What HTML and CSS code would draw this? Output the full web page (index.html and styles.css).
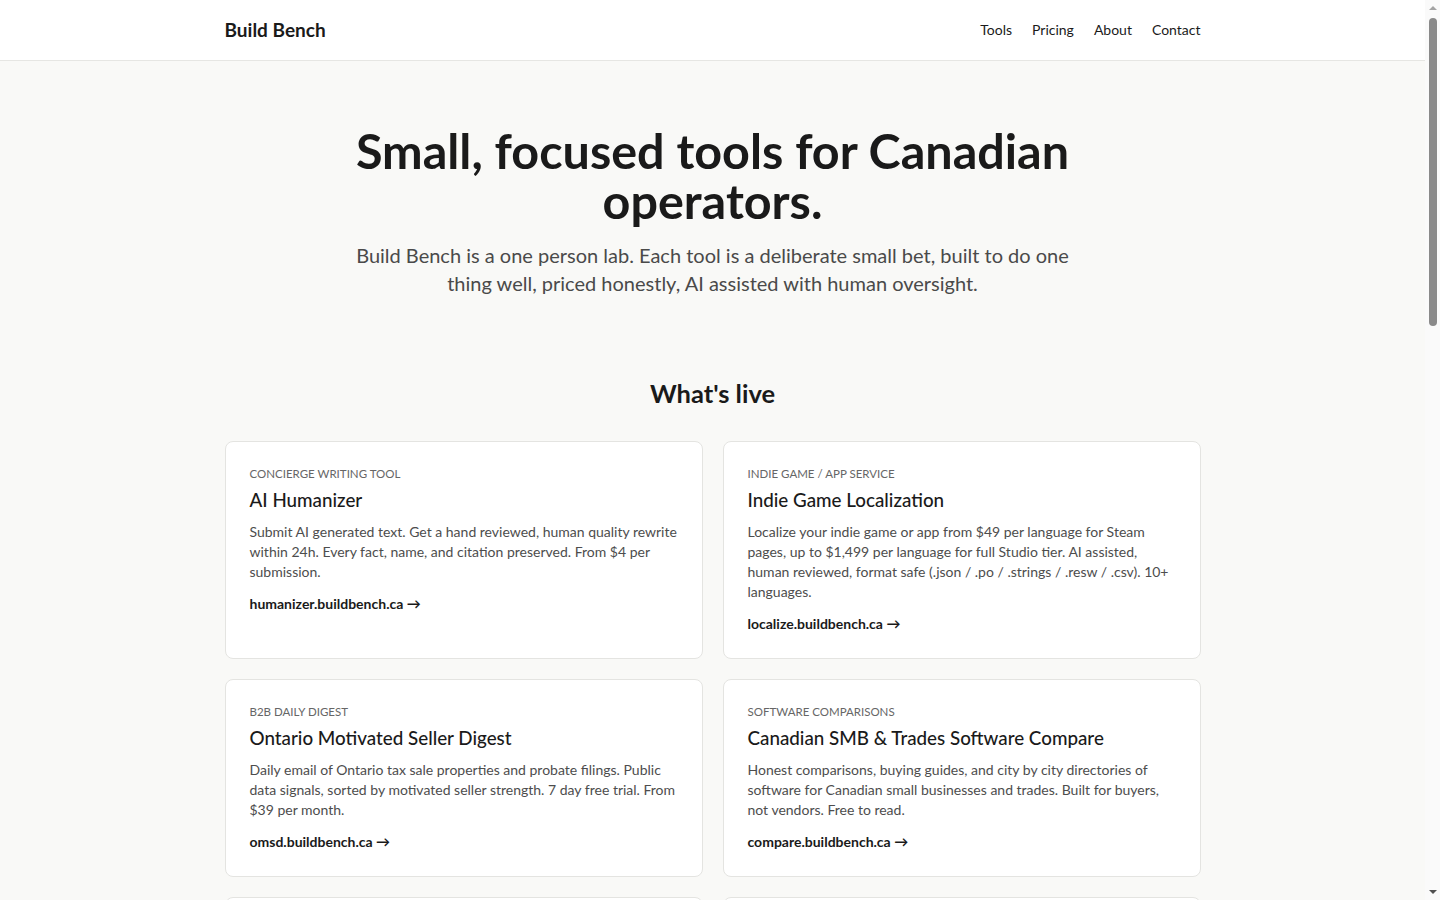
FILE: index.html
```html
<!DOCTYPE html>
<html lang="en">
<head>
<meta charset="utf-8">
<title>Build Bench</title>
<link rel="stylesheet" href="styles.css">
</head>
<body>
<header class="site-header">
  <div class="container header-inner">
    <a class="brand" href="#">Build Bench</a>
    <nav class="nav">
      <a href="#">Tools</a>
      <a href="#">Pricing</a>
      <a href="#">About</a>
      <a href="#">Contact</a>
    </nav>
  </div>
</header>
<main>
  <section class="hero">
    <div class="container">
      <h1>Small, focused tools for Canadian operators.</h1>
      <p class="lede">Build Bench is a one person lab. Each tool is a deliberate small bet, built to do one thing well, priced honestly, AI assisted with human oversight.</p>
    </div>
  </section>
  <section class="live">
    <div class="container">
      <h2>What's live</h2>
      <div class="grid">
        <article class="card">
          <div class="eyebrow">Concierge writing tool</div>
          <h3>AI Humanizer</h3>
          <p>Submit AI generated text. Get a hand reviewed, human quality rewrite within 24h. Every fact, name, and citation preserved. From $4 per submission.</p>
          <a class="card-link" href="#">humanizer.buildbench.ca →</a>
        </article>
        <article class="card">
          <div class="eyebrow">Indie game / app service</div>
          <h3>Indie Game Localization</h3>
          <p>Localize your indie game or app from $49 per language for Steam pages, up to $1,499 per language for full Studio tier. AI assisted, human reviewed, format safe (.json / .po / .strings / .resw / .csv). 10+ languages.</p>
          <a class="card-link" href="#">localize.buildbench.ca →</a>
        </article>
        <article class="card">
          <div class="eyebrow">B2B daily digest</div>
          <h3>Ontario Motivated Seller Digest</h3>
          <p>Daily email of Ontario tax sale properties and probate filings. Public data signals, sorted by motivated seller strength. 7 day free trial. From $39 per month.</p>
          <a class="card-link" href="#">omsd.buildbench.ca →</a>
        </article>
        <article class="card">
          <div class="eyebrow">Software comparisons</div>
          <h3>Canadian SMB &amp; Trades Software Compare</h3>
          <p>Honest comparisons, buying guides, and city by city directories of software for Canadian small businesses and trades. Built for buyers, not vendors. Free to read.</p>
          <a class="card-link" href="#">compare.buildbench.ca →</a>
        </article>
        <article class="card">
          <div class="eyebrow">Document service</div>
          <h3>Plain Language Rewrites</h3>
          <p>Turn dense policies, notices, and contracts into clear plain language. Reviewed by a person before delivery. From $19 per document.</p>
          <a class="card-link" href="#">plain.buildbench.ca →</a>
        </article>
        <article class="card">
          <div class="eyebrow">Small business utility</div>
          <h3>GST / HST Invoice Checker</h3>
          <p>Upload an invoice and check that Canadian sales tax lines, registration numbers, and totals add up. Free for up to 10 invoices a month.</p>
          <a class="card-link" href="#">invoices.buildbench.ca →</a>
        </article>
      </div>
    </div>
  </section>
  <section class="how">
    <div class="container">
      <h2>How Build Bench works</h2>
      <div class="steps">
        <div class="step">
          <h3>Small bets</h3>
          <p>Each tool starts as a narrow experiment with a clear job to do. If it earns its keep, it stays. If not, it is retired with notice.</p>
        </div>
        <div class="step">
          <h3>Honest pricing</h3>
          <p>Prices are listed up front in Canadian dollars. No seat games, no surprise upgrades, no long contracts.</p>
        </div>
        <div class="step">
          <h3>Human oversight</h3>
          <p>AI does the heavy lifting. A person reviews the output before anything reaches a customer.</p>
        </div>
      </div>
    </div>
  </section>
  <section class="retired">
    <div class="container">
      <h2>In the workshop</h2>
      <ul class="list">
        <li><strong>Permit Tracker</strong> — alerts for new municipal building permits in Ontario.</li>
        <li><strong>Grant Finder</strong> — a searchable list of Canadian small business grants.</li>
        <li><strong>Quote Builder</strong> — simple, branded quotes for trades businesses.</li>
      </ul>
    </div>
  </section>
</main>
<footer class="site-footer">
  <div class="container footer-inner">
    <span>© Build Bench. Made in Canada.</span>
    <span>hello@buildbench.ca</span>
  </div>
</footer>
<div class="scrollbar" aria-hidden="true">
  <span class="sb-arrow sb-up"></span>
  <span class="sb-thumb"></span>
  <span class="sb-arrow sb-down"></span>
</div>
</body>
</html>
```
FILE: styles.css
```css
* { box-sizing: border-box; }
html { margin: 0; padding: 0; background: #fafafa; }
body {
  margin: 0 15px 0 0;
  padding: 0;
  font-family: Lato, "Open Sans", sans-serif;
  color: #1a1a1a;
  background: #f9f9f7;
}
a { color: inherit; text-decoration: none; }
.container { max-width: 1024px; margin: 0 auto; padding: 0 24px; }

.site-header { background: #fff; border-bottom: 1px solid #e6e6e3; }
.header-inner { height: 60px; display: flex; align-items: center; justify-content: space-between; padding-bottom: 1px; }
.brand { font-weight: 700; font-size: 19px; }
.nav { display: flex; gap: 20px; font-size: 14px; }

.hero { padding: 64px 0 48px; text-align: center; }
.hero h1 { font-size: 48.5px; line-height: 50px; font-weight: 700; margin: 0 auto 16px; max-width: 760px; }
.lede { font-size: 20px; line-height: 28px; color: #4a4a4a; max-width: 720px; margin: 0 auto; }

.live { padding: 33px 0 48px; }
.live h2 { text-align: center; font-size: 25.5px; font-weight: 700; margin: 0 0 33px; }
.grid { display: grid; grid-template-columns: 1fr 1fr; gap: 20px 20px; }
.card { background: #fff; border: 1px solid #e4e4e1; border-radius: 8px; padding: 24px 24px 24px; }
.eyebrow { text-transform: uppercase; font-size: 11.5px; color: #666; letter-spacing: 0; line-height: 16px; }
.card h3 { font-size: 18.8px; font-weight: 500; margin: 6px 0 10px; line-height: 24px; }
.card p { font-size: 14px; line-height: 20px; color: #4d4d4d; margin: 0 0 11px; }
.card-link { font-size: 14px; font-weight: 700; line-height: 20px; display: inline-block; }

.how, .retired { padding: 40px 0; }
.how h2, .retired h2 { text-align: center; font-size: 25px; margin: 0 0 30px; }
.steps { display: grid; grid-template-columns: repeat(3, 1fr); gap: 20px; }
.step { background: #fff; border: 1px solid #e4e4e1; border-radius: 8px; padding: 24px; min-height: 180px; }
.step h3 { font-size: 18px; margin: 0 0 10px; font-weight: 500; }
.step p { font-size: 14px; line-height: 20px; color: #4d4d4d; margin: 0; }
.list { list-style: none; padding: 0; margin: 0 auto; max-width: 640px; font-size: 15px; line-height: 24px; color: #4d4d4d; }
.list li { padding: 14px 0; border-bottom: 1px solid #e4e4e1; }
.list strong { color: #1a1a1a; }

.site-footer { border-top: 1px solid #e6e6e3; background: #fff; margin-top: 40px; }
.footer-inner { display: flex; justify-content: space-between; padding-top: 32px; padding-bottom: 32px; font-size: 13px; color: #666; min-height: 220px; }

/* browser scrollbar as in the reference screenshot */
.scrollbar { position: fixed; top: 0; right: 0; width: 15px; height: 100vh; background: #fafafa; display: flex; flex-direction: column; align-items: center; padding: 6px 0; }
.sb-arrow { width: 0; height: 0; border-left: 4px solid transparent; border-right: 4px solid transparent; }
.sb-up { border-bottom: 4px solid #a3a3a3; }
.sb-down { border-top: 4px solid #505050; margin-top: auto; }
.sb-thumb { width: 8px; height: 308px; margin-top: 8px; background: #8a8a8a; border-radius: 4px; }
```
